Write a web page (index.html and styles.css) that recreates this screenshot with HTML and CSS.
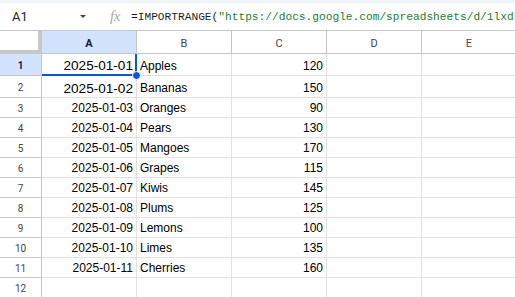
FILE: index.html
```html
<!DOCTYPE html>
<html lang="en">
  <head>
    <meta charset="UTF-8" />
    <title>Sheet</title>
    <link rel="stylesheet" href="styles.css">
  </head>
  <body>
    <div class="formula-bar">
      <div class="name-box">
        <span class="cell-ref">A1</span>
        <span class="caret"></span>
      </div>
      <span class="fx">fx</span>
      <div class="formula"><span class="fn">=IMPORTRANGE(</span><span class="str">"https://docs.google.com/spreadsheets/d/1lxd</span></div>
    </div>

    <div class="grid">
      <div class="corner"></div>
      <div class="col-head selected">A</div>
      <div class="col-head">B</div>
      <div class="col-head">C</div>
      <div class="col-head">D</div>
      <div class="col-head">E</div>

      <div class="row-head selected tall">1</div>
      <div class="cell date big active">2025-01-01<span class="handle"></span></div>
      <div class="cell">Apples</div>
      <div class="cell num">120</div>
      <div class="cell"></div>
      <div class="cell"></div>

      <div class="row-head tall">2</div>
      <div class="cell date big">2025-01-02</div>
      <div class="cell">Bananas</div>
      <div class="cell num">150</div>
      <div class="cell"></div>
      <div class="cell"></div>

      <div class="row-head">3</div>
      <div class="cell date">2025-01-03</div>
      <div class="cell">Oranges</div>
      <div class="cell num">90</div>
      <div class="cell"></div>
      <div class="cell"></div>

      <div class="row-head">4</div>
      <div class="cell date">2025-01-04</div>
      <div class="cell">Pears</div>
      <div class="cell num">130</div>
      <div class="cell"></div>
      <div class="cell"></div>

      <div class="row-head">5</div>
      <div class="cell date">2025-01-05</div>
      <div class="cell">Mangoes</div>
      <div class="cell num">170</div>
      <div class="cell"></div>
      <div class="cell"></div>

      <div class="row-head">6</div>
      <div class="cell date">2025-01-06</div>
      <div class="cell">Grapes</div>
      <div class="cell num">115</div>
      <div class="cell"></div>
      <div class="cell"></div>

      <div class="row-head">7</div>
      <div class="cell date">2025-01-07</div>
      <div class="cell">Kiwis</div>
      <div class="cell num">145</div>
      <div class="cell"></div>
      <div class="cell"></div>

      <div class="row-head">8</div>
      <div class="cell date">2025-01-08</div>
      <div class="cell">Plums</div>
      <div class="cell num">125</div>
      <div class="cell"></div>
      <div class="cell"></div>

      <div class="row-head">9</div>
      <div class="cell date">2025-01-09</div>
      <div class="cell">Lemons</div>
      <div class="cell num">100</div>
      <div class="cell"></div>
      <div class="cell"></div>

      <div class="row-head">10</div>
      <div class="cell date">2025-01-10</div>
      <div class="cell">Limes</div>
      <div class="cell num">135</div>
      <div class="cell"></div>
      <div class="cell"></div>

      <div class="row-head">11</div>
      <div class="cell date">2025-01-11</div>
      <div class="cell">Cherries</div>
      <div class="cell num">160</div>
      <div class="cell"></div>
      <div class="cell"></div>

      <div class="row-head">12</div>
      <div class="cell"></div>
      <div class="cell"></div>
      <div class="cell"></div>
      <div class="cell"></div>
      <div class="cell"></div>
    </div>
  </body>
</html>
```

FILE: styles.css
```css
body
{
  margin: 0;
  background-color: #ffffff;
  overflow: hidden;
  font-family: "Liberation Sans", Arial, sans-serif;
  color: #000000;
}
.formula-bar
{
  display: flex;
  align-items: center;
  height: 27px;
  border-top: 3px solid #f0f4f9;
  border-bottom: 1px solid #c4c7c5;
  white-space: nowrap;
  overflow: hidden;
}
.name-box
{
  display: flex;
  align-items: center;
  flex-shrink: 0;
  width: 110px;
  padding-left: 12px;
  box-sizing: border-box;
}
.cell-ref
{
  font-family: Roboto, sans-serif;
  font-size: 13px;
  color: #1f1f1f;
  width: 68px;
}
.caret
{
  width: 0;
  height: 0;
  border-left: 3px solid transparent;
  border-right: 3px solid transparent;
  border-top: 3px solid #444746;
}
.fx
{
  flex-shrink: 0;
  font-family: "Liberation Serif", serif;
  font-style: italic;
  font-size: 15px;
  color: #a8a8a8;
  width: 21px;
  letter-spacing: -0.5px;
}
.formula
{
  font-family: "Liberation Mono", monospace;
  font-size: 11.2px;
  color: #1f1f1f;
}
.formula .str
{
  color: #188038;
}
.grid
{
  display: grid;
  grid-template-columns: 42px 95px 95px 95px 95px 95px;
  grid-template-rows: 23px 22px 22px repeat(10, 20px);
}
.corner
{
  box-sizing: border-box;
  border-right: 4px solid #c7c7c7;
  border-bottom: 4px solid #c7c7c7;
  background-color: #ffffff;
}
.col-head
{
  box-sizing: border-box;
  border-right: 1px solid #c4c7c5;
  border-bottom: 1px solid #c4c7c5;
  font-family: Roboto, sans-serif;
  font-size: 11px;
  color: #444746;
  display: flex;
  align-items: center;
  justify-content: center;
  padding-top: 2px;
}
.col-head.selected,
.row-head.selected
{
  background-color: #d3e3fd;
  color: #0b1e49;
  font-weight: bold;
}
.row-head
{
  box-sizing: border-box;
  border-right: 1px solid #c4c7c5;
  border-bottom: 1px solid #c4c7c5;
  font-family: Roboto, sans-serif;
  font-size: 10px;
  color: #444746;
  display: flex;
  align-items: center;
  justify-content: center;
  padding-top: 1px;
}
.cell
{
  box-sizing: border-box;
  border-right: 1px solid #e1e1e1;
  border-bottom: 1px solid #e1e1e1;
  font-size: 12px;
  padding: 0 3px;
  display: flex;
  align-items: flex-end;
  padding-bottom: 2px;
  white-space: nowrap;
  overflow: visible;
  position: relative;
}
.cell.big
{
  font-size: 13.6px;
  padding-bottom: 1px;
}
.cell.date,
.cell.num
{
  justify-content: flex-end;
}
.cell.active
{
  border-right: 2px solid #0b57d0;
  border-bottom: 2px solid #0b57d0;
  padding-right: 2px;
}
.handle
{
  position: absolute;
  right: -6px;
  bottom: -6px;
  width: 9px;
  height: 9px;
  border-radius: 50%;
  background-color: #0b57d0;
  border: 1px solid #ffffff;
  box-sizing: border-box;
  z-index: 2;
}
```
